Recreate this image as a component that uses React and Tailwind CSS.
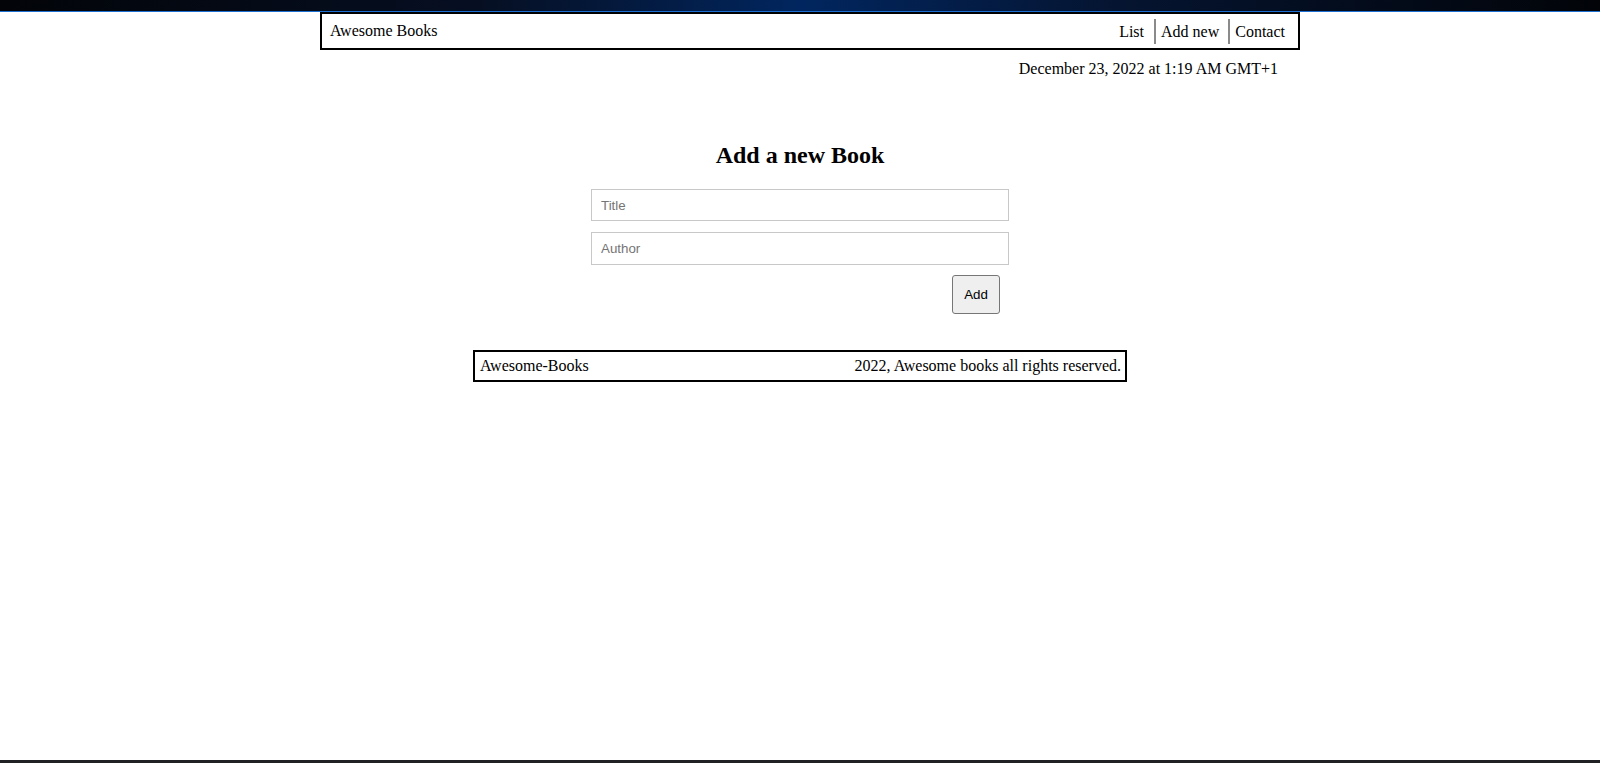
import React, { useState } from "react";

const serif = "font-['Liberation_Serif','Times_New_Roman',serif]";
const sans = "font-['Liberation_Sans',Arial,sans-serif]";

const NavBar = () => (
  <nav className="ml-[320px] w-[980px] h-[38px] border-2 border-black flex items-center justify-between pl-[8px] pr-[13px] text-[16px] text-black">
    <span>Awesome Books</span>
    <ul className="flex items-center h-[25px]">
      <li className="pr-[10px] leading-[25px]">List</li>
      <li className="border-l-2 border-[#8a8a8a] pl-[5px] pr-[9px] leading-[25px]">
        Add new
      </li>
      <li className="border-l-2 border-[#8a8a8a] pl-[5px] leading-[25px]">
        Contact
      </li>
    </ul>
  </nav>
);

export default function App() {
  const [title, setTitle] = useState("");
  const [author, setAuthor] = useState("");

  return (
    <div className={`h-[763px] w-full flex flex-col bg-white ${serif}`}>
      {/* top strip */}
      <div className="h-[11px] w-full bg-[linear-gradient(to_right,#020408,#060f22_30%,#01265f_50%,#051430_70%,#020408)]" />
      <div className="h-px w-full bg-[#1c6fd1]" />

      <NavBar />

      <div className="ml-[320px] w-[980px] mt-[10px] pr-[22px] text-right text-[16px] leading-[18px] text-black">
        December 23, 2022 at 1:19 AM GMT+1
      </div>

      {/* Add form */}
      <section className="mt-[63px] flex flex-col items-center">
        <h2 className="text-[24px] leading-[28px] font-bold text-black">
          Add a new Book
        </h2>
        <form
          className="mt-[20px] w-[418px] flex flex-col"
          onSubmit={(e) => e.preventDefault()}
        >
          <input
            type="text"
            placeholder="Title"
            value={title}
            onChange={(e) => setTitle(e.target.value)}
            className={`h-[32px] w-full border border-[#c8c8c8] px-[9px] text-[13.33px] text-black placeholder:text-[#757575] outline-none ${sans}`}
          />
          <input
            type="text"
            placeholder="Author"
            value={author}
            onChange={(e) => setAuthor(e.target.value)}
            className={`mt-[11px] h-[33px] w-full border border-[#c8c8c8] px-[9px] text-[13.33px] text-black placeholder:text-[#757575] outline-none ${sans}`}
          />
          <div className="mt-[10px] flex justify-end pr-[9px]">
            <button
              type="submit"
              className={`h-[39px] w-[48px] rounded-[3px] border border-[#767676] bg-[#efefef] text-[13.33px] text-black ${sans}`}
            >
              Add
            </button>
          </div>
        </form>
      </section>

      {/* Footer */}
      <footer className="mt-[36px] mx-auto w-[654px] h-[32px] border-2 border-black flex items-center justify-between pl-[5px] pr-[4px] text-[16px] text-black">
        <span>Awesome-Books</span>
        <span>2022, Awesome books all rights reserved.</span>
      </footer>

      <div className="mt-auto h-[3px] w-full bg-[#202124]" />
    </div>
  );
}
